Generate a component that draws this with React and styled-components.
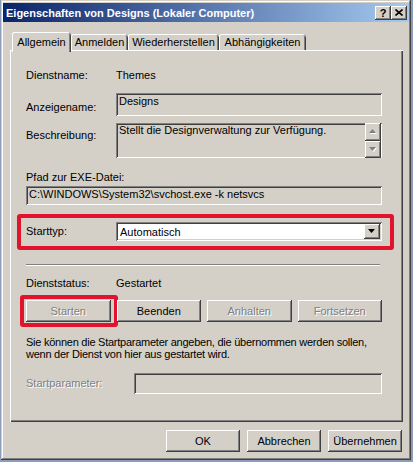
import styled, { createGlobalStyle } from "styled-components";

const GlobalStyle = createGlobalStyle`
  html, body { margin: 0; padding: 0; }
  body {
    background: #8d9db9;
    font-family: "Liberation Sans", Arial, sans-serif;
    font-size: 11px;
    color: #000;
  }
`;

const raised = `box-shadow: inset -1px -1px #404040, inset 1px 1px #ffffff, inset -2px -2px #808080, inset 2px 2px #d4d0c8;`;
const sunken = `box-shadow: inset 1px 1px #808080, inset -1px -1px #ffffff, inset 2px 2px #404040, inset -2px -2px #d4d0c8;`;

const Window = styled.div`
  margin-left: 1px;
  width: 410px;
  height: 460px;
  box-sizing: border-box;
  padding: 3px 2px 0;
  background: #d4d0c8;
  box-shadow: inset -1px -1px #404040, inset 1px 1px #d4d0c8, inset -2px -2px #808080, inset 2px 2px #ffffff;
  display: flex;
  flex-direction: column;
`;

const TitleBar = styled.div`
  height: 19px;
  display: flex;
  align-items: center;
  padding: 0 2px 0 3px;
  background: linear-gradient(to right, #0a246a, #a6caf0);
  color: #fff;
  font-weight: bold;
  font-size: 11px;
`;

const TitleButtons = styled.div`
  margin-left: auto;
  display: flex;
`;

const TitleButton = styled.div`
  width: 16px;
  height: 14px;
  box-sizing: border-box;
  background: #d4d0c8;
  ${raised}
  display: flex;
  align-items: center;
  justify-content: center;
  color: #000;
  font-weight: bold;
  font-size: 11px;
`;

const Body = styled.div`
  padding: 10px 6px 0 7px;
  display: flex;
  flex-direction: column;
`;

const TabList = styled.div`
  display: flex;
  align-items: flex-end;
  height: 18px;
  padding-left: 2px;
`;

const Tab = styled.div`
  width: ${(p) => p.$w}px;
  height: ${(p) => (p.$active ? 20 : 16)}px;
  margin-bottom: ${(p) => (p.$active ? -2 : 0)}px;
  position: relative;
  z-index: ${(p) => (p.$active ? 2 : 1)};
  box-sizing: border-box;
  background: #d4d0c8;
  border-radius: 3px 3px 0 0;
  box-shadow: inset 1px 0 #ffffff, inset 0 1px #ffffff, inset -1px 0 #404040, inset -2px 0 #808080;
  display: flex;
  align-items: ${(p) => (p.$active ? "flex-start" : "center")};
  padding-top: ${(p) => (p.$active ? 4 : 0)}px;
  justify-content: center;
  font-size: 11px;
`;

const Panel = styled.div`
  width: 393px;
  height: 372px;
  box-sizing: border-box;
  padding: 1px 21px 0 16px;
  box-shadow: inset 1px 1px #ffffff, inset -1px -1px #404040, inset -2px -2px #808080;
  display: flex;
  flex-direction: column;
`;

const Row = styled.div`
  display: flex;
  align-items: flex-start;
  margin-top: ${(p) => p.$top || 0}px;
  position: relative;
  ${(p) =>
    p.$mark &&
    `&::after {
      content: "";
      position: absolute;
      left: -9px; right: -12px; top: -8px; bottom: -9px;
      border: 4px solid #e2132d;
      border-radius: 3px;
      pointer-events: none;
    }`}
`;

const Label = styled.div`
  width: ${(p) => p.$w || 90}px;
  flex: none;
  line-height: 13px;
  padding-top: ${(p) => p.$pt || 0}px;
  color: ${(p) => (p.$disabled ? "#808080" : "#000")};
  text-shadow: ${(p) => (p.$disabled ? "1px 1px #ffffff" : "none")};
`;

const Value = styled.div`
  line-height: 13px;
`;

const Text = styled.div`
  line-height: ${(p) => p.$lh || 13}px;
  margin-top: ${(p) => p.$top || 0}px;
  white-space: nowrap;
  letter-spacing: ${(p) => p.$ls || 0}px;
`;

const Field = styled.div`
  flex: 1;
  height: ${(p) => p.$h}px;
  box-sizing: border-box;
  background: ${(p) => p.$bg || "#d4d0c8"};
  ${sunken}
  padding: ${(p) => p.$pad || "2px 3px"};
  line-height: 13px;
  display: flex;
`;

const FieldText = styled.div`
  flex: 1;
`;

const ScrollCol = styled.div`
  width: 16px;
  display: flex;
  flex-direction: column;
  margin: -1px -2px -1px 0;
`;

const ScrollButton = styled.div`
  flex: 1;
  background: #d4d0c8;
  ${raised}
  display: flex;
  align-items: center;
  justify-content: center;
`;

const Combo = styled.div`
  flex: 1;
  height: 19px;
  box-sizing: border-box;
  background: #fff;
  ${sunken}
  padding: 2px 2px 2px 4px;
  display: flex;
  align-items: center;
  font-size: 11px;
`;

const DropButton = styled.div`
  margin-left: auto;
  width: 16px;
  height: 15px;
  box-sizing: border-box;
  background: #d4d0c8;
  ${raised}
  display: flex;
  align-items: center;
  justify-content: center;
`;

const Separator = styled.div`
  margin-top: ${(p) => p.$top}px;
  width: 354px;
  height: 2px;
  box-shadow: inset 0 1px #808080, inset 0 -1px #ffffff;
`;

const ButtonGrid = styled.div`
  margin-top: ${(p) => p.$top}px;
  display: grid;
  grid-template-columns: repeat(4, 1fr);
  column-gap: 6px;
`;

const Button = styled.div`
  width: ${(p) => (p.$w ? `${p.$w}px` : "auto")};
  height: 22px;
  box-sizing: border-box;
  background: #d4d0c8;
  ${raised}
  display: flex;
  align-items: center;
  justify-content: center;
  font-size: 11px;
  position: relative;
  color: ${(p) => (p.$disabled ? "#808080" : "#000")};
  text-shadow: ${(p) => (p.$disabled ? "1px 1px #ffffff" : "none")};
  ${(p) =>
    p.$mark &&
    `&::after {
      content: "";
      position: absolute;
      left: -6px; right: -7px; top: -5px; bottom: -5px;
      border: 4px solid #e2132d;
      border-radius: 3px;
      pointer-events: none;
    }`}
`;

const Footer = styled.div`
  margin-top: 8px;
  display: flex;
  justify-content: flex-end;
  gap: 7px;
  padding-right: 1px;
`;

function Arrow({ up, disabled }) {
  const pts = up ? "0,4 3.5,0 7,4" : "0,0 3.5,4 7,0";
  return (
    <svg width="8" height="5" viewBox="0 0 8 5">
      {disabled && <polygon points={pts} fill="#fff" transform="translate(1,1)" />}
      <polygon points={pts} fill={disabled ? "#808080" : "#000"} />
    </svg>
  );
}

export default function App() {
  return (
    <>
      <GlobalStyle />
      <Window>
        <TitleBar>
          Eigenschaften von Designs (Lokaler Computer)
          <TitleButtons>
            <TitleButton>?</TitleButton>
            <TitleButton>
              <svg width="8" height="7" viewBox="0 0 8 7">
                <path d="M0.5 0.5 L7.5 6.5 M7.5 0.5 L0.5 6.5" stroke="#000" strokeWidth="1.6" />
              </svg>
            </TitleButton>
          </TitleButtons>
        </TitleBar>
        <Body>
          <TabList>
            <Tab $active $w={59}>Allgemein</Tab>
            <Tab $w={57}>Anmelden</Tab>
            <Tab $w={91}>Wiederherstellen</Tab>
            <Tab $w={87}>Abhängigkeiten</Tab>
          </TabList>
          <Panel>
            <Row $top={18}>
              <Label>Dienstname:</Label>
              <Value>Themes</Value>
            </Row>
            <Row $top={11}>
              <Label $pt={8}>Anzeigename:</Label>
              <Field $h={23}>Designs</Field>
            </Row>
            <Row $top={7}>
              <Label $pt={6}>Beschreibung:</Label>
              <Field $h={35} $pad="1px 3px">
                <FieldText>Stellt die Designverwaltung zur Verfügung.</FieldText>
                <ScrollCol>
                  <ScrollButton>
                    <Arrow up disabled />
                  </ScrollButton>
                  <ScrollButton>
                    <Arrow disabled />
                  </ScrollButton>
                </ScrollCol>
              </Field>
            </Row>
            <Text $top={13}>Pfad zur EXE-Datei:</Text>
            <Row $top={2}>
              <Field $h={19} $pad="2px 3px">C:\WINDOWS\System32\svchost.exe -k netsvcs</Field>
            </Row>
            <Row $top={17} $mark>
              <Label $pt={3}>Starttyp:</Label>
              <Combo>
                Automatisch
                <DropButton>
                  <Arrow />
                </DropButton>
              </Combo>
            </Row>
            <Separator $top={23} />
            <Row $top={11}>
              <Label>Dienststatus:</Label>
              <Value>Gestartet</Value>
            </Row>
            <ButtonGrid $top={10}>
              <Button $disabled $mark>Starten</Button>
              <Button>Beenden</Button>
              <Button $disabled>Anhalten</Button>
              <Button $disabled>Fortsetzen</Button>
            </ButtonGrid>
            <Text $top={14} $lh={12} $ls={-0.25}>
              Sie können die Startparameter angeben, die übernommen werden sollen,
              <br />
              wenn der Dienst von hier aus gestartet wird.
            </Text>
            <Row $top={13}>
              <Label $w={108} $pt={4} $disabled>
                Startparameter:
              </Label>
              <Field $h={21} />
            </Row>
          </Panel>
          <Footer>
            <Button $w={74}>OK</Button>
            <Button $w={74}>Abbrechen</Button>
            <Button $w={74}>Übernehmen</Button>
          </Footer>
        </Body>
      </Window>
    </>
  );
}
